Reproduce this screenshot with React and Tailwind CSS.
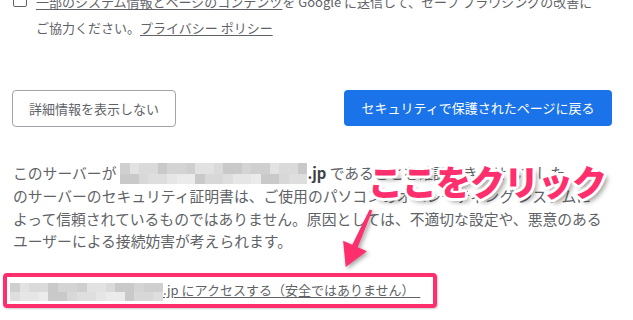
import React from 'react'

const SHADES = [
  'bg-[#cfcfcf]', 'bg-[#dadada]', 'bg-[#d4d4d4]', 'bg-[#e2e2e2]', 'bg-[#c9c9c9]',
  'bg-[#dedede]', 'bg-[#ebebeb]', 'bg-[#d8d8d8]', 'bg-[#e6e6e6]', 'bg-[#f0f0f0]',
]

const Pixelated = ({ cols, className }) => {
  const cells = []
  for (let i = 0; i < cols * 2; i++) {
    const row = i < cols ? 0 : 1
    const idx = (i * 7 + row * 3 + (i % 3)) % 5 + row * 4
    cells.push(<span key={i} className={SHADES[idx % SHADES.length]} />)
  }
  return (
    <span
      className={`inline-grid align-middle ${className}`}
      style={{ gridTemplateColumns: `repeat(${cols}, 1fr)` }}
    >
      {cells}
    </span>
  )
}

const Arrow = () => (
  <svg
    className="absolute left-[330px] top-[200px] drop-shadow-[2px_2px_2px_rgba(0,0,0,0.35)]"
    width="60"
    height="80"
    viewBox="0 0 60 80"
  >
    <polygon
      points="39.6,9.4 42.4,10.6 27.7,47.2 36.9,51.3 15.7,67 13.1,40.7 22.3,44.8"
      fill="#ff2f6e"
    />
  </svg>
)

export default function App() {
  return (
    <div className="relative h-[320px] w-[633px] overflow-hidden bg-white font-['Noto_Sans_CJK_JP','Noto_Sans',sans-serif] text-[#5f6368]">
      {/* opt-in checkbox */}
      <div className="-mt-[11px] flex text-[13px] leading-[26px]">
        <div className="ml-[13px] mt-[4px] h-[14px] w-[14px] shrink-0 rounded-[2px] border border-[#5f6368]" />
        <p className="ml-[9px]">
          <span className="underline underline-offset-2">一部のシステム情報とページのコンテンツ</span>を Google に送信して、セーフ ブラウジングの改善に
          <br />
          ご協力ください。<span className="underline underline-offset-2">プライバシー ポリシー</span>
        </p>
      </div>

      {/* buttons */}
      <div className="mt-[49px] flex items-start justify-between pl-[12px] pr-[21px]">
        <button className="h-[37px] w-[164px] rounded-[4px] border border-[#a0a3a8] bg-white text-[13px] text-[#5f6368]">
          詳細情報を表示しない
        </button>
        <button className="h-[36px] w-[268px] rounded-[4px] bg-[#1a73e8] text-[13px] text-white">
          セキュリティで保護されたページに戻る
        </button>
      </div>

      {/* details */}
      <p className="ml-[13px] mt-[35px] whitespace-nowrap text-[14.8px] leading-[22.3px]">
        このサーバーが<Pixelated cols={20} className="ml-[4px] h-[21px] w-[187px] -translate-y-[1px]" />
        <strong className="font-bold text-[#3c4043]">.jp</strong> であることを確認できませんでした。こ
        <br />
        のサーバーのセキュリティ証明書は、ご使用のパソコンのオペレーティング システムに
        <br />
        よって信頼されているものではありません。原因としては、不適切な設定や、悪意のある
        <br />
        ユーザーによる接続妨害が考えられます。
      </p>

      {/* proceed link, highlighted */}
      <div className="ml-[3px] mt-[21px] flex h-[35px] w-[434px] items-center rounded-[4px] border-4 border-[#ff2f6e] pl-[3px] shadow-[1px_1px_2px_rgba(0,0,0,0.2)]">
        <a className="whitespace-nowrap text-[13px] leading-[18px] text-[#5f6368]">
          <Pixelated cols={16} className="h-[18px] w-[153px]" />
          <span className="underline underline-offset-2">.jp にアクセスする（安全ではありません）&nbsp;&nbsp;</span>
        </a>
      </div>

      {/* callout */}
      <div className="absolute left-[368px] top-[163px] text-[35px] font-black leading-none tracking-[-1px] text-[#ff2f6e] [text-shadow:0_0_3px_#fff,3px_0_0_#fff,-3px_0_0_#fff,0_3px_0_#fff,0_-3px_0_#fff,2px_2px_0_#fff,-2px_-2px_0_#fff,2px_-2px_0_#fff,-2px_2px_0_#fff,4px_4px_5px_rgba(0,0,0,0.4)]">
        ここをクリック
      </div>
      <Arrow />
    </div>
  )
}
